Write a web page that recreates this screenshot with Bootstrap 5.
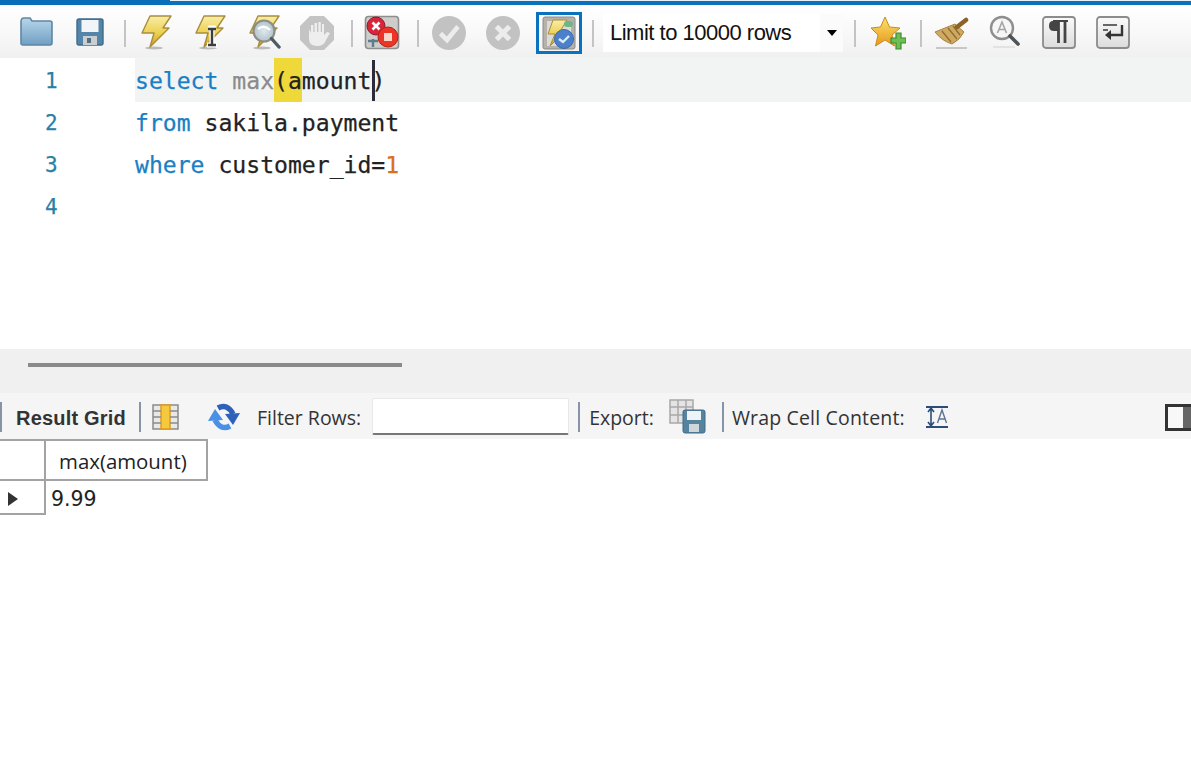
<!DOCTYPE html>
<html lang="en">
<head>
<meta charset="utf-8">
<title>Query</title>
<link href="https://cdn.jsdelivr.net/npm/bootstrap@5.3.0/dist/css/bootstrap.min.css" rel="stylesheet">
<style>
html,body{height:100%;margin:0;background:#fff;overflow:hidden}
.app-shell{width:1191px;height:759px}
.accent-a{width:170px;height:5px;background:#0a6fb8}
.accent-b{height:5px;background:#0a72bd;border-top:1px solid #e6f0f8}
.tool-strip{height:53px;padding-left:9px;padding-top:3px;background:linear-gradient(#fff 0,#f8f8f8 55%,#f0f0f0 100%)}
.slot{width:54px;height:42px;flex:none}
.slot-armed{width:56px}
.tsep{width:2px;height:27px;background:#c4c4c4;flex:none}
.m1{margin:0 2px 0 7px}.m2{margin:0 2px 0 7px}.m3{margin:0 3px 0 8px}.m4{margin:0 9px 0 6px}.m5{margin:0 5px 0 11px}.m6{margin:0 2px 0 5px}
.armed{width:46px;height:42px;border:3px solid #0a72bd;margin-left:6px}
.limit-box{width:240px;height:38px;background:#fff;font:22px/38px "Liberation Sans",sans-serif;color:#111;padding-left:7px;flex:none;letter-spacing:-.5px}
.limit-arrow{width:23px;height:38px;background:#fbfbfb}
.limit-caret{width:0;height:0;border:5px solid transparent;border-top:6px solid #000;border-bottom:0}
.code-pane{height:291px;font:23.1px/42px "DejaVu Sans Mono",monospace;color:#222;-webkit-text-stroke:.25px}
.code-row{height:42px}
.code-row.active-row{height:44px;padding-top:2px}
.active-row .code-text{background:#f2f3f3;height:44px;margin-top:-2px;padding-top:2px}
.gutter{width:135px;flex:none;padding-left:45px;color:#2a7fa5;font-size:21px}
.code-text{flex:1;white-space:pre;position:relative}
.kw{color:#1a7fc4}.fn{color:#8b8b8b}.num{color:#d9711c}
.brace{background:#efd93a;display:inline-block;height:44px;margin-top:-2px;padding-top:2px;vertical-align:top}
.caret-mark{position:absolute;left:237px;top:2px;width:3px;height:41px;background:#2b2b3b}
.split-band{height:44px;background:#f0f0f0;padding:14px 0 0 28px}
.split-thumb{width:374px;height:4px;background:#8a8a8a}
.result-strip{height:46px;padding-top:2px;background:#f5f5f6;font:19.5px/42px "Open Sans",sans-serif;color:#333;white-space:nowrap}
.rsep{width:2px;height:30px;background:#8794a8;flex:none}
.strip-text{padding-top:2px}
.strip-wide{letter-spacing:.17px}
.strong-label{font:bold 20px/42px "Liberation Sans",sans-serif;color:#333;letter-spacing:.2px;margin:0 13px 0 14px;width:110px;padding-top:2px}
.filter-field{width:197px;height:37px;background:#fff;border:1px solid #e8e8e8;border-bottom:2px solid #777;border-radius:2px;margin:-2px 9px 0 11px;flex:none}
.panel-toggle{width:26px;height:27px;border:3px solid #333;border-right:0;display:flex;margin-left:auto}
.panel-toggle i{flex:1;background:#f8f8f8}
.panel-toggle b{width:8px;background:#666}
.grid-head{height:42px;font:20.4px/40px "Open Sans",sans-serif;color:#222}
.corner{width:46px;border-top:2px solid #a3a3a3;border-bottom:2px solid #a3a3a3;border-right:2px solid #a3a3a3;flex:none}
.col-title{width:162px;border-top:2px solid #a3a3a3;border-bottom:2px solid #a3a3a3;border-right:2px solid #a3a3a3;padding-left:13px}
.grid-row{height:34px;font:20.5px/36px "DejaVu Sans",sans-serif;color:#222}
.pointer{width:46px;border-right:2px solid #a3a3a3;border-bottom:2px solid #a3a3a3;flex:none;padding:11px 0 0 8px}
.pointer i{display:block;width:0;height:0;border-left:10px solid #333;border-top:7px solid transparent;border-bottom:7px solid transparent}
.cell-val{padding-left:5px}
svg{display:block;margin:auto;filter:blur(.45px)}
.gap-grid{margin:0 0 0 10px}
.gap-refresh{margin:0 0 0 26px}
.gap-filter{margin:0 0 0 16px}
.gap-export{margin:0 15px 0 15px}
.gap-wrap{margin:0 0 0 20px}
</style>
</head>
<body>
<svg width="0" height="0" style="position:absolute">
<defs>
<linearGradient id="gFolder" x1="0" y1="0" x2="0" y2="1"><stop offset="0" stop-color="#b8d6ea"/><stop offset="1" stop-color="#6f9fc2"/></linearGradient>
<linearGradient id="gBolt" x1="0" y1="0" x2="0" y2="1"><stop offset="0" stop-color="#f8eeaa"/><stop offset=".55" stop-color="#ecd04e"/><stop offset="1" stop-color="#c99f26"/></linearGradient>
<linearGradient id="gBtn" x1="0" y1="0" x2="0" y2="1"><stop offset="0" stop-color="#fafafa"/><stop offset="1" stop-color="#dcdcdc"/></linearGradient>
<linearGradient id="gStar" x1="0" y1="0" x2="0" y2="1"><stop offset="0" stop-color="#fbe36c"/><stop offset="1" stop-color="#e8971c"/></linearGradient>
<radialGradient id="gLens" cx=".5" cy=".5" r=".6"><stop offset="0" stop-color="#dfe9ee"/><stop offset="1" stop-color="#a8bcc4"/></radialGradient>
<symbol id="boltShape" viewBox="0 0 36 36"><ellipse cx="17" cy="33" rx="9" ry="1.5" fill="#bbb"/><path d="M13 1H34L26 13H32L13 32L17 18H5Z" fill="url(#gBolt)" stroke="#a98d3c" stroke-width="1.4" stroke-linejoin="round"/></symbol>
</defs>
</svg>
<div class="app-shell d-flex flex-column">
  <div class="d-flex"><div class="accent-a"></div><div class="accent-b flex-grow-1"></div></div>

  <div class="tool-strip d-flex align-items-center">
    <div class="slot d-flex align-items-center"><svg width="36" height="36"><path d="M3 7Q3 3 6 3H12L14 6H32Q34 6 34 8V28Q34 30 32 30H5Q3 30 3 28Z" fill="url(#gFolder)" stroke="#5f87a3" stroke-width="1.6"/></svg></div>
    <div class="slot d-flex align-items-center"><svg width="36" height="36"><rect x="5" y="4" width="26" height="26" rx="2" fill="#5484a8" stroke="#3e6b8c" stroke-width="1.4"/><rect x="9.5" y="5" width="17" height="12" fill="#f2f5f7"/><rect x="11" y="21" width="14" height="9" fill="#c8ced2"/><rect x="15" y="23" width="4" height="5" fill="#52707f"/></svg></div>
    <div class="tsep m1"></div>
    <div class="slot d-flex align-items-center"><svg width="36" height="36"><use href="#boltShape"/></svg></div>
    <div class="slot d-flex align-items-center"><svg width="36" height="36"><use href="#boltShape"/><path d="M17 13H25M21 13V29M16 30H26" stroke="#fff" stroke-width="5"/><path d="M17 14H25M21 14V29M17 30H25" stroke="#3d3d3d" stroke-width="2.4"/></svg></div>
    <div class="slot d-flex align-items-center"><svg width="36" height="36"><use href="#boltShape"/><circle cx="19" cy="16" r="10.5" fill="url(#gLens)" stroke="#8d8d83" stroke-width="2.2"/><path d="M13 14Q19 9 25 15" stroke="#fff" stroke-width="2.4" fill="none"/><path d="M26.5 23.5L34 32" stroke="#4f5a62" stroke-width="3.4" stroke-linecap="round"/></svg></div>
    <div class="slot d-flex align-items-center"><svg width="36" height="36"><path d="M11 1H25L35 11V25L25 35H11L1 25V11Z" fill="#c4c4c4"/><path d="M10 14V24Q10 31 18 31Q25 31 27 25L31 18L28 17L25 20V9H23V17H21.8V7H19.4V17H18V8H15.6V17H14.4V10H12V18Z" fill="#eeeeee"/></svg></div>
    <div class="tsep m2"></div>
    <div class="slot d-flex align-items-center"><svg width="36" height="36"><rect x="1.5" y="1.5" width="33" height="32" rx="3" fill="#cfcdca" stroke="#8f8f8f" stroke-width="1.6"/><path d="M4 26H14M9 24V32" stroke="#5b7d8e" stroke-width="2.4"/><circle cx="12" cy="11" r="9" fill="#d9253a" stroke="#8a1a2a"/><path d="M8.500 7.500L15.500 14.500M15.500 7.500L8.500 14.500" stroke="#fff" stroke-width="2.600"/><circle cx="24" cy="22" r="10" fill="#ec3527" stroke="#b02316"/><rect x="20" y="18" width="8" height="8" fill="#f7d8c9"/></svg></div>
    <div class="tsep m3"></div>
    <div class="slot d-flex align-items-center"><svg width="36" height="36"><circle cx="18" cy="18" r="17" fill="#c2c2c2"/><path d="M9.500 18.500L16 25L27 11.500" stroke="#ececec" stroke-width="4.600" fill="none"/></svg></div>
    <div class="slot d-flex align-items-center"><svg width="36" height="36"><circle cx="18" cy="18" r="17" fill="#c2c2c2"/><path d="M11.500 11.500L24.500 24.500M24.500 11.500L11.500 24.500" stroke="#ececec" stroke-width="5"/></svg></div>
    <div class="slot slot-armed d-flex align-items-center"><div class="armed d-flex align-items-center"><svg width="34" height="34"><rect x="1" y="1" width="32" height="32" rx="2" fill="#b6b2ab" stroke="#8a8a8a"/><rect x="5" y="5" width="24" height="25" fill="#dedbd5"/><path d="M11 4H25L19 14H24L8 30L13 18H6Z" fill="url(#gBolt)" stroke="#a98d3c"/><rect x="22" y="5" width="9" height="6" rx="3" fill="#6fb48a"/><circle cx="22" cy="23" r="9.500" fill="#4d80cb" stroke="#3969ad"/><path d="M17 23L21 26L27 20" stroke="#dcebf8" stroke-width="2.400" fill="none"/></svg></div></div>
    <div class="tsep m4"></div>
    <div class="limit-box d-flex align-items-center justify-content-between"><span>Limit to 10000 rows</span><span class="limit-arrow d-flex align-items-center justify-content-center"><span class="limit-caret"></span></span></div>
    <div class="tsep m5"></div>
    <div class="slot d-flex align-items-center"><svg width="36" height="36"><path d="M15 2L19.500 12L30 13L22 20L24.500 31L15 25L5.500 31L8 20L1 13L10.500 12Z" fill="url(#gStar)" stroke="#c98a1c"/><path d="M26 18H31V23H36V28H31V34H26V28H21V23H26Z" fill="#6fbf50" stroke="#3c8a35" stroke-width="1.200"/></svg></div>
    <div class="tsep m6"></div>
    <div class="slot d-flex align-items-center"><svg width="36" height="36"><path d="M3 33H34" stroke="#c7c7c7" stroke-width="2"/><path d="M2 17L22 9L31 17Q27 25 19 29Q9 26 2 17Z" fill="#cfa95f" stroke="#a5823f"/><path d="M9 16L18 27M15 13L24 24M20 11L27 20" stroke="#8e6d34" stroke-width="1.300"/><path d="M24 12L33 5" stroke="#8b6327" stroke-width="4.500" stroke-linecap="round"/></svg></div>
    <div class="slot d-flex align-items-center"><svg width="36" height="36"><circle cx="15" cy="13" r="11" fill="#f6f6f6" stroke="#8e8e8e" stroke-width="2.400"/><path d="M10.500 18L15 7L19.500 18M12 14.500H18" stroke="#a5a5a5" stroke-width="1.600" fill="none"/><path d="M23 21L31 29" stroke="#4d5357" stroke-width="3.600" stroke-linecap="round"/><path d="M6 32H28" stroke="#dcdcdc" stroke-width="1.500"/></svg></div>
    <div class="slot d-flex align-items-center"><svg width="36" height="36"><rect x="2" y="2" width="32" height="31" rx="3" fill="url(#gBtn)" stroke="#8c8c8c" stroke-width="1.800"/><path d="M18 6H12Q8 6 8 11Q8 16 13 16H18Z" fill="#444"/><path d="M17.500 6V28M24 6V28" stroke="#444" stroke-width="2.800"/><path d="M12 6H27" stroke="#444" stroke-width="2"/></svg></div>
    <div class="slot d-flex align-items-center"><svg width="36" height="36"><rect x="2" y="2" width="32" height="31" rx="3" fill="url(#gBtn)" stroke="#8c8c8c" stroke-width="1.800"/><path d="M8 10H22M8 15H13" stroke="#666" stroke-width="2.200"/><path d="M27 10V20H15" stroke="#333" stroke-width="2.400" fill="none"/><path d="M10 20L16 15V25Z" fill="#333"/></svg></div>
  </div>

  <div class="code-pane">
    <div class="code-row active-row d-flex"><div class="gutter">1</div><div class="code-text"><span class="kw">select</span> <span class="fn">max</span><span class="brace">(a</span>mount)<span class="caret-mark"></span></div></div>
    <div class="code-row d-flex"><div class="gutter">2</div><div class="code-text"><span class="kw">from</span> sakila.payment</div></div>
    <div class="code-row d-flex"><div class="gutter">3</div><div class="code-text"><span class="kw">where</span> customer_id=<span class="num">1</span></div></div>
    <div class="code-row d-flex"><div class="gutter">4</div><div class="code-text"></div></div>
  </div>

  <div class="split-band"><div class="split-thumb"></div></div>

  <div class="result-strip d-flex align-items-center">
    <div class="rsep"></div>
    <div class="strong-label">Result Grid</div>
    <div class="rsep"></div>
    <svg class="gap-grid" width="30" height="30"><rect x="2" y="3" width="25" height="24" fill="#e8e8e8" stroke="#8a8a8a" stroke-width="1.500"/><rect x="10" y="3" width="9" height="24" fill="#f6c93c" stroke="#e39a1c" stroke-width="1.500"/><path d="M2 9H10M19 9H27M2 15H10M19 15H27M2 21H10M19 21H27" stroke="#8a8a8a" stroke-width="1.500"/></svg>
    <svg class="gap-refresh" width="34" height="34"><path d="M11 8Q20 3 26 14" stroke="#2e62ba" stroke-width="5.500" fill="none"/><path d="M18 14L33 13L26 25Z" fill="#2e62ba"/><path d="M23 26Q14 31 8 20" stroke="#4a90e6" stroke-width="5.500" fill="none"/><path d="M16 20L1 21L8 9Z" fill="#4a90e6"/></svg>
    <span class="gap-filter strip-text">Filter Rows:</span>
    <div class="filter-field"></div>
    <div class="rsep"></div>
    <span class="strip-text" style="margin-left:9px">Export:</span>
    <svg class="gap-export" width="38" height="36"><rect x="1" y="1" width="23" height="23" fill="#e4e4e4" stroke="#a8a8a8" stroke-width="1.500"/><path d="M1 8H24M1 16H24M9 1V24M17 1V24" stroke="#a8a8a8" stroke-width="1.500"/><rect x="14" y="11" width="22" height="23" rx="2" fill="#56849f" stroke="#3e6b8c"/><rect x="18" y="12" width="14" height="9" fill="#eef3f6"/><rect x="20" y="25" width="10" height="8" fill="#cfd6da"/></svg>
    <div class="rsep"></div>
    <span class="ms-2 strip-text strip-wide">Wrap Cell Content:</span>
    <svg class="gap-wrap" width="24" height="24"><path d="M1 2H23M1 22H23" stroke="#2c4d7a" stroke-width="1.800"/><path d="M6 3V21M3 7L6 3L9 7M3 17L6 21L9 17" stroke="#2c4d7a" stroke-width="1.600" fill="none"/><path d="M12.500 18L17 5L21.500 18M14 14H20" stroke="#5c7594" stroke-width="1.400" fill="none"/></svg>
    <div class="panel-toggle"><i></i><b></b></div>
  </div>

  <div class="grid-head d-flex"><div class="corner"></div><div class="col-title">max(amount)</div></div>
  <div class="grid-row d-flex"><div class="pointer"><i></i></div><div class="cell-val">9.99</div></div>
</div>
<script src="https://cdn.jsdelivr.net/npm/bootstrap@5.3.0/dist/js/bootstrap.bundle.min.js"></script>
</body>
</html>
